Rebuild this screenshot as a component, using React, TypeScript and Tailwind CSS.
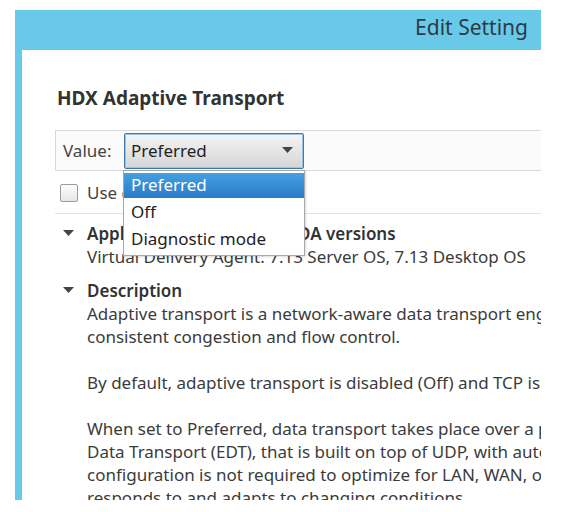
const font = { fontFamily: '"Noto Sans", "Open Sans", sans-serif' };

const descLines = [
  "Adaptive transport is a network-aware data transport engine that provides efficient,",
  "consistent congestion and flow control.",
  "",
  "By default, adaptive transport is disabled (Off) and TCP is always used.",
  "",
  "When set to Preferred, data transport takes place over a proprietary transport protocol, Enlightened",
  "Data Transport (EDT), that is built on top of UDP, with automatic fallback to TCP. Additional",
  "configuration is not required to optimize for LAN, WAN, or Internet conditions. The protocol",
  "responds to and adapts to changing conditions.",
];

function Caret() {
  return (
    <svg width="11" height="7" viewBox="0 0 11 7" className="shrink-0">
      <path d="M0 0 L11 0 L5.5 6 Z" fill="#444" />
    </svg>
  );
}

export default function App() {
  return (
    <div className="h-[512px] w-[562px] overflow-hidden bg-white pl-[15px] pt-[10px]" style={font}>
      <div className="flex h-[490px] w-[526px] flex-col bg-[#68c9e9]">
        <div className="flex h-[40px] shrink-0 items-center justify-end pb-[4px] pr-[13px] text-[21px] text-[#2c3b45]">
          Edit Setting
        </div>
        <div className="ml-[7px] flex-1 overflow-hidden bg-white pl-[33px] text-[17px] text-[#3b3b3b]">
          <h1 className="ml-[2px] mt-[35px] text-[19px] leading-[26px] font-bold text-[#333]">
            HDX Adaptive Transport
          </h1>

          <div className="mt-[19px] flex h-[41px] w-[600px] items-center border border-[#d9d9d9] bg-[#fbfbfb] pl-[7px]">
            <span className="w-[61px] shrink-0 text-[#444]">Value:</span>
            <div className="relative">
              <div className="flex h-[36px] w-[180px] items-center justify-between rounded-[2px] border border-[#3a78ad] bg-gradient-to-b from-[#f4f4f4] to-[#d6d6d6] pl-[6px] pr-[10px] text-[17px] text-[#222] shadow-[inset_0_0_0_1px_#9fc3e2]">
                <span>Preferred</span>
                <Caret />
              </div>
              <div className="absolute left-[-1px] top-[37px] z-10 w-[182px] border border-[#a8a8a8] bg-white pb-[2px] pt-[2px] text-[17px] text-[#222] shadow-[1px_1px_2px_rgba(0,0,0,0.15)]">
                <div className="flex h-[25px] items-center bg-gradient-to-b from-[#45a0e0] to-[#2b7bc9] pl-[7px] text-white">
                  Preferred
                </div>
                <div className="flex h-[28px] items-center pl-[7px]">Off</div>
                <div className="flex h-[27px] items-center pl-[7px]">Diagnostic mode</div>
              </div>
            </div>
          </div>

          <div className="mt-[13px] flex h-[18px] items-center pl-[5px]">
            <span className="h-[18px] w-[18px] shrink-0 rounded-[2px] border border-[#9c9c9c] bg-gradient-to-b from-[#fdfdfd] to-[#e6e6e6]" />
            <span className="ml-[9px] whitespace-nowrap text-[#444]">Use default value: Off</span>
          </div>

          <div className="mt-[11px] h-px w-[600px] bg-[#e3e3e3]" />

          <div className="mt-[8px] flex items-center leading-[23px]">
            <span className="ml-[8px] w-[24px] shrink-0">
              <Caret />
            </span>
            <span className="whitespace-nowrap font-semibold text-[#333]">
              Applies to the following VDA versions
            </span>
          </div>
          <div className="ml-[32px] whitespace-nowrap leading-[23px]">
            Virtual Delivery Agent: 7.13 Server OS, 7.13 Desktop OS
          </div>

          <div className="mt-[11px] flex items-center leading-[23px]">
            <span className="ml-[8px] w-[24px] shrink-0">
              <Caret />
            </span>
            <span className="font-semibold text-[#333]">Description</span>
          </div>
          <div className="ml-[32px] leading-[23px]">
            {descLines.map((line, i) => (
              <div key={i} className="h-[23px] whitespace-nowrap">
                {line}
              </div>
            ))}
          </div>
        </div>
      </div>
    </div>
  );
}
